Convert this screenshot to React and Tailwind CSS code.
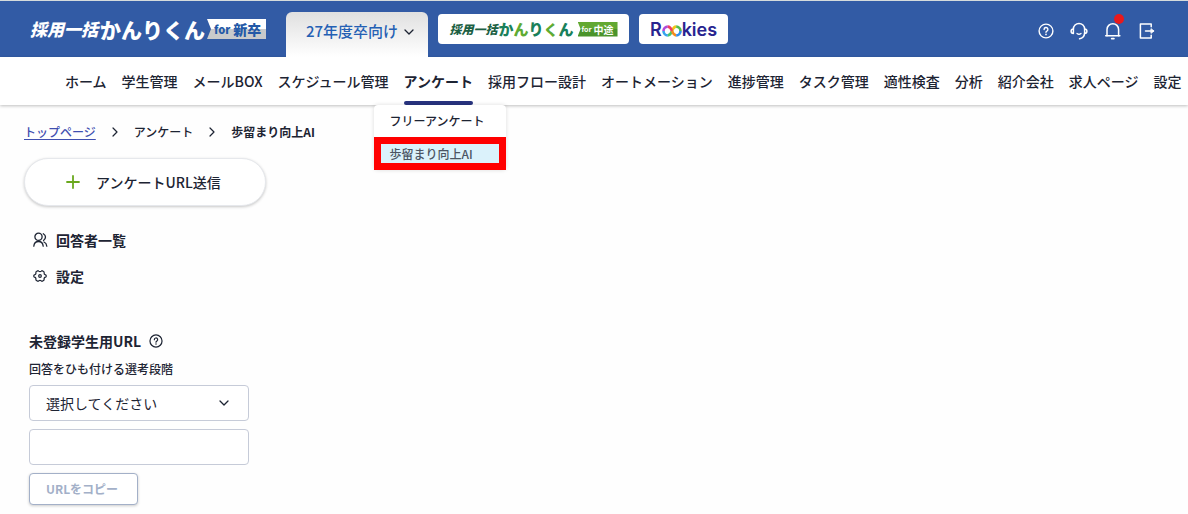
import React from 'react';

const stroke = {
  fill: 'none',
  stroke: 'currentColor',
  strokeLinecap: 'round',
  strokeLinejoin: 'round',
  'aria-hidden': true,
};

function HelpIcon({ className }) {
  return (
    <svg viewBox="0 0 16 16" className={className} {...stroke} strokeWidth="1.4">
      <circle cx="8" cy="8" r="6.9" />
      <path d="M6.1 6.5a1.9 1.9 0 1 1 2.8 1.6c-.6.3-.9.6-.9 1.2" />
      <path d="M8 11.4v.1" strokeWidth="1.7" />
    </svg>
  );
}

function HeadsetIcon({ className }) {
  return (
    <svg viewBox="0 0 18 18" className={className} {...stroke} strokeWidth="1.5">
      <path d="M3.4 7a5.6 5.6 0 0 1 11.2 0" />
      <path d="M3.4 7v4.4C1.9 11.4 1.1 10.4 1.1 9.2S1.9 7 3.4 7Z" />
      <path d="M14.6 7v4.4c1.5 0 2.3-1 2.3-2.200S16.100 7 14.600 7Z" />
      <path d="M14.6 11.4c-.3 3-2 4.900-5 5.400" />
      <path d="M7 11.5c1.1.8 2.9.8 4 0" strokeWidth="1.3" />
    </svg>
  );
}

function BellIcon({ className }) {
  return (
    <svg viewBox="0 0 18 18" className={className} {...stroke} strokeWidth="1.5">
      <path d="M3 13.7V7.500a5.800 5.800 0 0 1 11.600 0v6.200" />
      <path d="M1.7 13.8h14.2" />
      <path d="M7.7 16.6h2.2" strokeWidth="1.8" />
    </svg>
  );
}

function LogoutIcon({ className }) {
  return (
    <svg viewBox="0 0 18 18" className={className} {...stroke} strokeWidth="1.5">
      <path d="M13.2 4.8V1.9H2.4v14.2h10.8v-2.9" />
      <path d="M7.5 9h8" />
      <path d="M13.3 6.900 15.800 9l-2.500 2.100Z" fill="currentColor" strokeWidth="1" />
    </svg>
  );
}

function ChevronIcon({ className }) {
  return (
    <svg viewBox="0 0 10 10" className={className} {...stroke} strokeWidth="1.3">
      <path d="m1 3 4 4 4-4" />
    </svg>
  );
}

function SeparatorIcon() {
  return (
    <svg viewBox="0 0 10 10" className="size-[10px] shrink-0" {...stroke} strokeWidth="1.2">
      <path d="m3 1 4 4-4 4" />
    </svg>
  );
}

function UsersIcon({ className }) {
  return (
    <svg viewBox="0 0 16 16" className={className} {...stroke} strokeWidth="1.3">
      <circle cx="6.5" cy="4.8" r="3.6" />
      <path d="M1.8 14.2c.3-2.900 2-4.700 4.700-4.700s4.400 1.800 4.700 4.700" />
      <path d="M11.3 1.8c1.5.8 2.200 1.900 2.200 3.300S12.800 7.700 11.500 8.500" />
      <path d="M12 10c1.700.7 2.600 2.100 2.800 4.200" />
    </svg>
  );
}

function SettingsIcon({ className }) {
  return (
    <svg viewBox="0 0 16 16" className={className} {...stroke} strokeWidth="1.4">
      <path d="M5 2.200c.5-.3 1.100-.2 1.500.2.900.8 2.100.8 3 0 .4-.4 1-.5 1.500-.2l1.100.7c.5.300.7.800.6 1.400-.2 1.200.4 2.100 1.600 2.300.5.100.8.500.8 1.100v.6c0 .6-.3 1-.8 1.100-1.200.2-1.800 1.100-1.600 2.300.1.600-.1 1.100-.6 1.400l-1.100.7c-.5.300-1.100.2-1.500-.2-.9-.8-2.100-.8-3 0-.4.400-1 .5-1.500.2l-1.100-.7c-.5-.3-.7-.8-.6-1.400.2-1.200-.4-2.100-1.600-2.300C1.200 9.300.9 8.900.9 8.300v-.6c0-.6.3-1 .8-1.100 1.200-.2 1.800-1.100 1.600-2.300-.1-.6.1-1.100.6-1.400Z" />
      <circle cx="8" cy="8" r="1.5" />
    </svg>
  );
}

function PlusIcon({ className }) {
  return (
    <svg viewBox="0 0 14 14" className={className} {...stroke} strokeWidth="1.8">
      <path d="M7 1v12M1 7h12" />
    </svg>
  );
}

function RookiesRings() {
  return (
    <svg viewBox="0 0 20 12" className="mt-[2px] h-3 w-5" fill="none" strokeWidth="2.6" aria-hidden="true">
      <path d="M5.800 1.600A4.400 4.400 0 0 0 1.500 6" stroke="#b04bd8" />
      <path d="M1.500 6a4.400 4.400 0 0 0 4.300 4.400" stroke="#35a3ee" />
      <path d="M5.800 10.400C8.400 10.400 9.200 8 10 6" stroke="#4cc36b" />
      <path d="M10 6c.8-2.200 1.700-4.400 4.200-4.400" stroke="#f0c419" />
      <path d="M5.800 1.600C8.300 1.600 9.200 4 10 6" stroke="#ee3f63" />
      <path d="M10 6c.8 2 1.700 4.400 4.200 4.400" stroke="#f58a1f" />
      <path d="M14.200 1.600A4.400 4.400 0 0 1 18.500 6" stroke="#52bd4b" />
      <path d="M18.500 6a4.400 4.400 0 0 1-4.300 4.400" stroke="#2f8ef0" />
    </svg>
  );
}

const before = ['ホーム', '学生管理', 'メールBOX', 'スケジュール管理'];
const after = [
  '採用フロー設計',
  'オートメーション',
  '進捗管理',
  'タスク管理',
  '適性検査',
  '分析',
  '紹介会社',
  '求人ページ',
  '設定',
];

function NavLink({ label }) {
  return (
    <li className="flex">
      <a href="#" className="flex items-center">
        {label}
      </a>
    </li>
  );
}

function Header() {
  return (
    <header className="flex h-[57px] items-center border-t border-[#d5dbdc] bg-[#325ba5]">
      <a href="#" className="ml-[30px] flex w-[256px] shrink-0 items-center whitespace-nowrap text-white">
        <span className="text-[17px] leading-6 font-black italic">採用一括</span>
        <span className="ml-[2px] text-[21px] leading-6 font-black">かんりくん</span>
        <span className="ml-[2px] flex h-5 items-center gap-[3px] bg-linear-to-b from-white from-50% to-[#c9cacb] to-50% pr-[5px] pl-[7px] font-black text-[#2459a7] [clip-path:polygon(0_0,100%_0,100%_100%,0_100%,4px_50%)]">
          <span className="text-[11px]">for</span>
          <span className="text-sm">新卒</span>
        </span>
      </a>
      <button
        type="button"
        className="mt-[11px] flex w-[142px] shrink-0 items-center justify-center gap-[6px] self-stretch rounded-t-md bg-linear-to-b from-[#e0e0e0] to-white pb-[6px] pl-[6px] text-[15px] font-medium whitespace-nowrap text-[#2460b4]"
      >
        27年度卒向け
        <ChevronIcon className="size-[10px] text-[#1d2433]" />
      </button>
      <a
        href="#"
        className="ml-[10px] flex h-[30px] w-[191px] shrink-0 items-center justify-center rounded bg-white whitespace-nowrap"
      >
        <span className="text-xs font-black text-[#1c6043] italic">採用一括</span>
        <span className="ml-px text-[15px] leading-5 font-black text-[#19805a]">
          か<span className="text-[#5fab33]">ん</span>り<span className="text-[#5fab33]">く</span>ん
        </span>
        <span className="ml-1 flex h-[15px] items-center gap-[2px] bg-linear-to-b from-[#62a832] from-50% to-[#4a942b] to-50% px-1 font-bold text-white [clip-path:polygon(0_0,100%_0,100%_100%,0_100%,3px_50%)]">
          <span className="text-[7px]">for</span>
          <span className="text-[10px]">中途</span>
        </span>
      </a>
      <a
        href="#"
        className="ml-[10px] flex h-[30px] w-[89px] shrink-0 items-center justify-center rounded bg-white pt-[2px] font-[Inter,sans-serif] text-lg font-semibold text-[#28248f]"
      >
        <span>R</span>
        <RookiesRings />
        <span>kies</span>
      </a>
      <div className="ml-auto flex items-center gap-4 pt-1 pr-8 text-white">
        <button type="button" aria-label="ヘルプ">
          <HelpIcon className="size-4" />
        </button>
        <button type="button" aria-label="サポート">
          <HeadsetIcon className="size-[18px]" />
        </button>
        <button type="button" aria-label="お知らせ" className="relative">
          <BellIcon className="size-[18px]" />
          <span className="absolute -top-2 right-[-2px] size-[10px] rounded-full bg-[#e8191c]" />
        </button>
        <button type="button" aria-label="ログアウト">
          <LogoutIcon className="size-[18px]" />
        </button>
      </div>
    </header>
  );
}

function MainNav() {
  return (
    <nav className="bg-white shadow-[0_1px_3px_rgba(0,0,0,0.25)]">
      <ul className="flex h-12 gap-[15px] pl-[65px] text-sm font-medium whitespace-nowrap">
        {before.map((label) => (
          <NavLink key={label} label={label} />
        ))}
        <li className="relative flex">
          <a href="#" className="flex items-center font-bold">
            アンケート
          </a>
          <span className="absolute inset-x-0 bottom-0 h-1 rounded-sm bg-[#28337f]" />
          <ul className="absolute top-full left-[-30px] w-[132px] rounded bg-white text-xs shadow-[0_0_4px_rgba(0,0,0,0.14)]">
            <li>
              <a href="#" className="flex h-8 items-center px-4">
                フリーアンケート
              </a>
            </li>
            <li className="border-[7px] border-[#ff0000] bg-[#dbf2fb]">
              <a href="#" className="flex h-[19px] items-center px-[9px] text-[#4b5563]">
                歩留まり向上AI
              </a>
            </li>
          </ul>
        </li>
        {after.map((label) => (
          <NavLink key={label} label={label} />
        ))}
      </ul>
    </nav>
  );
}

export default function App() {
  return (
    <div className="min-h-screen overflow-x-hidden bg-[#fefefe] font-['Noto_Sans_CJK_JP',sans-serif] text-[#1d2433]">
      <Header />
      <MainNav />
      <main className="pb-2">
        <ol className="flex items-center gap-[14px] px-6 pt-[17px] text-xs leading-5">
          <li>
            <a href="#" className="font-medium text-[#3f4fb0] underline underline-offset-2">
              トップページ
            </a>
          </li>
          <SeparatorIcon />
          <li className="font-medium">アンケート</li>
          <SeparatorIcon />
          <li className="font-bold">歩留まり向上AI</li>
        </ol>
        <aside className="w-[266px] pl-6">
          <button
            type="button"
            className="mt-4 flex h-12 w-full items-center rounded-full border border-[#e6e8ec] bg-white pl-[41px] text-sm font-medium shadow-[0_1px_3px_rgba(0,0,0,0.22)]"
          >
            <PlusIcon className="mr-4 size-[14px] text-[#6aa81e]" />
            アンケートURL送信
          </button>
          <ul className="mt-4 pl-2 text-sm font-bold">
            <li>
              <a href="#" className="flex h-9 items-center gap-2">
                <UsersIcon className="size-4" />
                回答者一覧
              </a>
            </li>
            <li>
              <a href="#" className="flex h-9 items-center gap-2">
                <span className="flex w-4 justify-center">
                  <SettingsIcon className="size-[14px]" />
                </span>
                設定
              </a>
            </li>
          </ul>
          <section className="mt-9 pr-[17px] pl-[5px]">
            <h2 className="flex h-[22px] items-center gap-2 text-sm font-bold">
              未登録学生用URL
              <button type="button" aria-label="未登録学生用URLについて">
                <HelpIcon className="size-[14px]" />
              </button>
            </h2>
            <label htmlFor="stage" className="mt-[5px] block text-xs leading-6 font-medium">
              回答をひも付ける選考段階
            </label>
            <div className="relative mt-1">
              <select
                id="stage"
                className="block h-9 w-full appearance-none rounded border border-[#c6cbd8] bg-white px-4 text-sm"
              >
                <option>選択してください</option>
              </select>
              <ChevronIcon className="pointer-events-none absolute top-[13px] right-5 size-[10px]" />
            </div>
            <input
              type="text"
              aria-label="URL"
              className="mt-2 block h-9 w-full rounded border border-[#c6cbd8] bg-white px-4 text-sm"
            />
            <button
              type="button"
              className="mt-2 block h-8 rounded border border-[#a3b0c8] bg-white pr-[19px] pl-4 text-xs font-bold text-[#a3b0c8] shadow-[0_1px_3px_rgba(0,0,0,0.2)]"
            >
              URLをコピー
            </button>
          </section>
        </aside>
      </main>
    </div>
  );
}
